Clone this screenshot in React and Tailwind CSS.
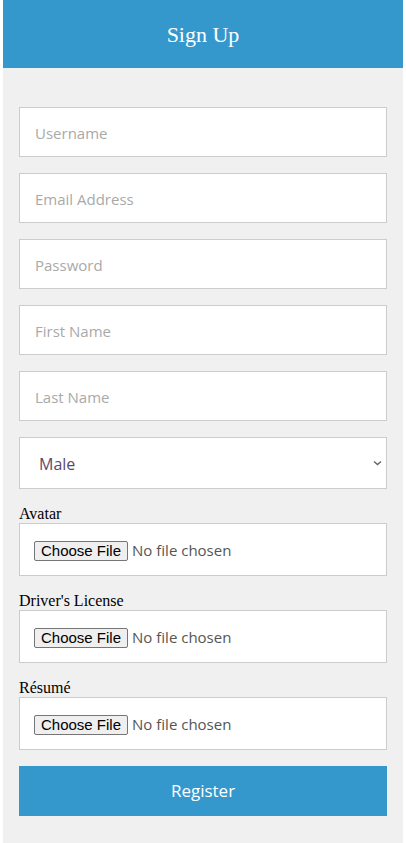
import React from 'react';

const fields = [
  { name: 'username', type: 'text', placeholder: 'Username' },
  { name: 'email', type: 'email', placeholder: 'Email Address' },
  { name: 'password', type: 'password', placeholder: 'Password' },
  { name: 'firstName', type: 'text', placeholder: 'First Name' },
  { name: 'lastName', type: 'text', placeholder: 'Last Name' },
];

const uploads = [
  { name: 'avatar', label: 'Avatar' },
  { name: 'license', label: "Driver's License" },
  { name: 'resume', label: 'Résumé' },
];

const FileField = ({ name, label }) => (
  <div className="flex flex-col">
    <label htmlFor={name} className="font-['Liberation_Serif',serif] text-[16px] leading-[18px] text-black">
      {label}
    </label>
    <div className="h-[53px] border border-[#cccccc] bg-white px-[14px] pt-[1px] flex items-center">
      <input
        id={name}
        name={name}
        type="file"
        className="font-['Open_Sans',sans-serif] text-[15px] text-[#555555] file:font-['Liberation_Sans',sans-serif] file:text-[15px] file:text-black file:bg-[#efefef] file:border file:border-[#767676] file:rounded-[2px] file:px-[6px] file:h-[20px] file:leading-[18px] file:mr-[4px]"
      />
    </div>
  </div>
);

const App = () => {
  return (
    <div className="min-h-screen bg-white px-[3px]">
      <div className="bg-[#f0f0f0] min-h-[843px]">
        <div className="h-[68px] bg-[#3498cd] flex items-center justify-center">
          <h1 className="font-['Liberation_Serif',serif] text-[22px] text-white">Sign Up</h1>
        </div>
        <form className="px-[16px] pt-[39px] pb-[27px] flex flex-col gap-[16px]">
          {fields.map(f => (
            <input
              key={f.name}
              name={f.name}
              type={f.type}
              placeholder={f.placeholder}
              className="h-[50px] w-full border border-[#cccccc] bg-white px-[15px] pt-[2px] font-['Open_Sans',sans-serif] text-[15px] text-[#555555] placeholder:text-[#a9a9a9] outline-none"
            />
          ))}
          <div className="relative">
            <select
              name="gender"
              defaultValue="male"
              className="h-[52px] w-full appearance-none border border-[#cccccc] bg-white pl-[19px] pt-[2px] font-['Open_Sans',sans-serif] text-[16px] text-[#5a4a6a] outline-none"
            >
              <option value="male">Male</option>
              <option value="female">Female</option>
            </select>
            <svg className="absolute right-[5px] top-[23px] pointer-events-none" width="9" height="6" viewBox="0 0 9 6">
              <path d="M1 1.5 L4.5 4.5 L8 1.5" fill="none" stroke="#666" strokeWidth="1.5" />
            </svg>
          </div>
          {uploads.map(u => (
            <FileField key={u.name} {...u} />
          ))}
          <button
            type="submit"
            className="h-[50px] w-full bg-[#3498cd] text-white font-['Open_Sans',sans-serif] text-[17px]"
          >
            Register
          </button>
        </form>
      </div>
    </div>
  );
};

export default App;
